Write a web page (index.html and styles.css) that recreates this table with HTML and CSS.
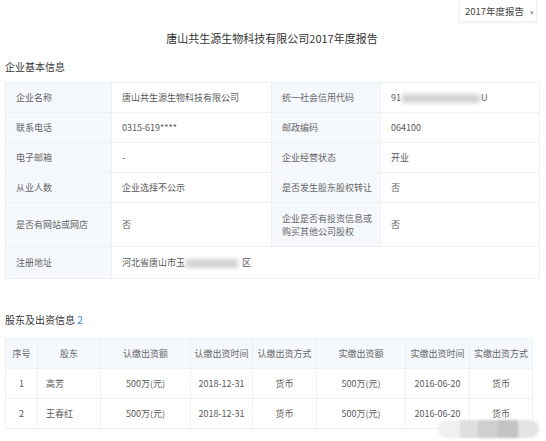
FILE: index.html
```html
<!DOCTYPE html>
<html lang="zh-CN">
<head>
<meta charset="utf-8">
<link rel="stylesheet" href="styles.css">
</head>
<body>
<div class="page">
  <div class="topbar">
    <div class="dropdown">2017年度报告<span class="caret">▾</span></div>
  </div>
  <h1 class="title">唐山共生源生物科技有限公司2017年度报告</h1>
  <h2 class="section">企业基本信息</h2>
  <table class="info">
    <colgroup><col class="c1"><col class="c2"><col class="c3"><col class="c4"></colgroup>
    <tr class="r1"><td class="lab">企业名称</td><td>唐山共生源生物科技有限公司</td><td class="lab">统一社会信用代码</td><td>91<span class="blur b1"></span>U</td></tr>
    <tr class="r2"><td class="lab">联系电话</td><td>0315-619****</td><td class="lab">邮政编码</td><td>064100</td></tr>
    <tr class="r3"><td class="lab">电子邮箱</td><td>-</td><td class="lab">企业经营状态</td><td>开业</td></tr>
    <tr class="r4"><td class="lab">从业人数</td><td>企业选择不公示</td><td class="lab">是否发生股东股权转让</td><td>否</td></tr>
    <tr class="r5"><td class="lab">是否有网站或网店</td><td>否</td><td class="lab">企业是否有投资信息或<br>购买其他公司股权</td><td>否</td></tr>
    <tr class="r6"><td class="lab">注册地址</td><td colspan="3">河北省唐山市玉<span class="blur b2"></span>区</td></tr>
  </table>
  <h2 class="section sec2">股东及出资信息 <span class="count">2</span></h2>
  <table class="holders">
    <colgroup><col class="h1"><col class="h2"><col class="h3"><col class="h4"><col class="h5"><col class="h6"><col class="h7"><col class="h8"></colgroup>
    <tr class="head"><th>序号</th><th>股东</th><th>认缴出资额</th><th>认缴出资时间</th><th>认缴出资方式</th><th>实缴出资额</th><th>实缴出资时间</th><th>实缴出资方式</th></tr>
    <tr><td>1</td><td class="name">高芳</td><td>500万(元)</td><td>2018-12-31</td><td>货币</td><td>500万(元)</td><td>2016-06-20</td><td>货币</td></tr>
    <tr><td>2</td><td class="name">王春红</td><td>500万(元)</td><td>2018-12-31</td><td>货币</td><td>500万(元)</td><td>2016-06-20</td><td>货币</td></tr>
  </table>
  <div class="watermark">
    <span class="wm w1"></span><span class="wm w2"></span><span class="wm w3"></span><span class="wm w4"></span><span class="wm w5"></span>
  </div>
</div>
</body>
</html>
```
FILE: styles.css
```css
html, body {
  margin: 0;
  padding: 0;
  background: #fff;
}
body {
  font-family: "Noto Sans CJK SC", "Noto Sans", sans-serif;
  color: #555;
  font-size: 9px;
  width: 546px;
  height: 441px;
  overflow: hidden;
}
.page {
  position: relative;
  padding: 0 7px 0 5px;
}
.topbar {
  display: flex;
  justify-content: flex-end;
  height: 22px;
}
.dropdown {
  margin-right: 2px;
  width: 78px;
  height: 22px;
  box-sizing: border-box;
  padding: 2px 0 0 5px;
  font-size: 9.5px;
  line-height: 18px;
  white-space: nowrap;
  color: #444;
  border: 1px solid #f0f0f0;
  border-top: none;
  box-shadow: 0 1px 3px rgba(0,0,0,0.06);
}
.caret {
  font-size: 7px;
  color: #999;
  margin-left: 6px;
}
.title {
  margin: 8px 0 0;
  text-align: center;
  font-weight: normal;
  font-size: 11px;
  line-height: 16px;
  color: #333;
}
.section {
  margin: 14px 0 0;
  font-weight: normal;
  font-size: 10px;
  line-height: 14px;
  color: #333;
}
.info {
  margin-top: 8px;
  width: 534px;
  border-collapse: collapse;
  table-layout: fixed;
}
.info td {
  border: 1px solid #edf0f4;
  padding: 0 0 0 10px;
  height: 29px;
  vertical-align: middle;
  line-height: 13px;
  color: #595959;
}
.info td.lab {
  background: #f5f8fc;
  color: #666;
}
.info .c1 { width: 106px; }
.info .c2 { width: 160px; }
.info .c3 { width: 109px; }
.info .c4 { width: 159px; }
.info .r5 td { height: 43px; }
.info .r6 td { height: 31px; }
.blur {
  display: inline-block;
  vertical-align: middle;
  height: 9px;
  background: #c8c8c8;
  filter: blur(2px);
  opacity: 0.8;
}
.b1 { width: 78px; margin: 0 1px; }
.b2 { width: 52px; margin: 0 4px 0 1px; }
.sec2 {
  margin-top: 34px;
}
.count {
  color: #3b8fe0;
}
.holders {
  margin-top: 11px;
  width: 527px;
  border-collapse: collapse;
  table-layout: fixed;
}
.holders th, .holders td {
  border: 1px solid #eef0f3;
  text-align: center;
  font-weight: normal;
  padding: 0;
  height: 29px;
  color: #595959;
}
.holders th {
  background: #f5f8fc;
  color: #666;
}
.holders td.name {
  text-align: left;
  padding-left: 8px;
}
.holders .h1 { width: 32px; }
.holders .h2 { width: 63px; }
.holders .h3 { width: 90px; }
.holders .h4 { width: 62px; }
.holders .h5 { width: 64px; }
.holders .h6 { width: 89px; }
.holders .h7 { width: 64px; }
.holders .h8 { width: 63px; }
.watermark {
  position: absolute;
  left: 438px;
  top: 420px;
  width: 101px;
  height: 18px;
  border-radius: 9px;
  background: #efefef;
  display: flex;
  overflow: hidden;
  filter: blur(1px);
}
.wm { display: block; height: 18px; }
.w1 { width: 22px; background: #f0f0f0; }
.w2 { width: 18px; background: #dedede; }
.w3 { width: 20px; background: #cfcfcf; }
.w4 { width: 20px; background: #c4c4c4; }
.w5 { width: 21px; background: #e4e4e4; }
```
